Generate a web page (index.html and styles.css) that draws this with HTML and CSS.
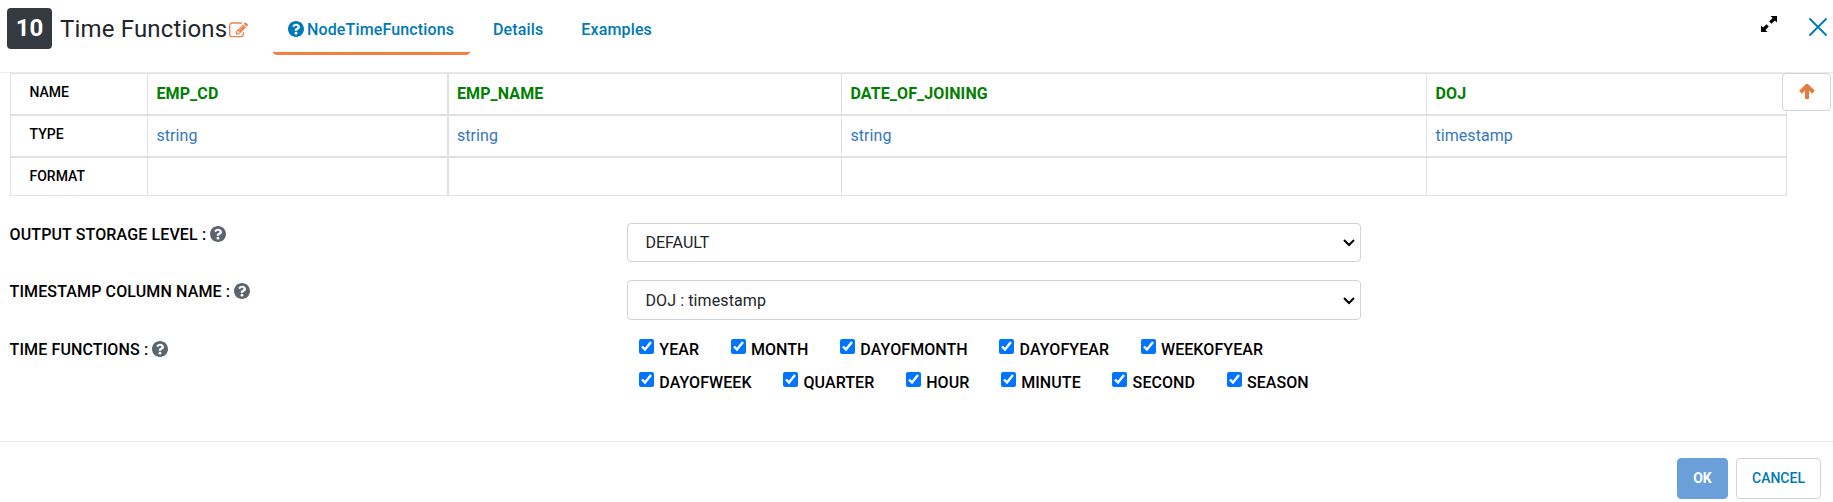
FILE: index.html
```html
<!DOCTYPE html>
<html lang="en">
<head>
<meta charset="utf-8">
<title>Time Functions</title>
<link rel="stylesheet" href="styles.css">
</head>
<body>
<svg class="sprite" aria-hidden="true">
  <symbol id="help" viewBox="8 8 496 496"><path d="M504 256c0 136.997-111.043 248-248 248S8 392.997 8 256C8 119.083 119.043 8 256 8s248 111.083 248 248zM262.655 90c-54.497 0-89.255 22.957-116.549 63.758-3.536 5.286-2.353 12.415 2.715 16.258l34.699 26.31c5.205 3.947 12.621 3.008 16.665-2.122 17.864-22.658 30.113-35.797 57.303-35.797 20.429 0 45.698 13.148 45.698 32.958 0 14.976-12.363 22.667-32.534 33.976C247.128 238.528 216 254.941 216 296v4c0 6.627 5.373 12 12 12h56c6.627 0 12-5.373 12-12v-1.333c0-28.462 83.186-29.647 83.186-106.667 0-58.002-60.165-102-116.531-102zM256 338c-25.365 0-46 20.635-46 46 0 25.364 20.635 46 46 46s46-20.636 46-46c0-25.365-20.635-46-46-46z"/></symbol>
</svg>
<header class="header">
  <span class="badge">10</span>
  <h1 class="title">Time Functions</h1>
  <svg class="edit" viewBox="0 0 1792 1792"><path d="M888 1184l116-116-152-152-116 116v56h96v96h56zm440-720q-16-16-33 1l-350 350q-17 17-1 33t33-1l350-350q17-17 1-33zm80 594v190q0 119-84.500 203.500t-203.500 84.500h-832q-119 0-203.500-84.500t-84.500-203.500v-832q0-119 84.500-203.500t203.500-84.500h832q63 0 117 25 15 7 18 23 3 17-9 29l-49 49q-14 14-32 8-23-6-45-6h-832q-66 0-113 47t-47 113v832q0 66 47 113t113 47h832q66 0 113-47t47-113v-126q0-13 9-22l64-64q15-15 35-7t20 29zm-96-738l288 288-672 672h-288v-288zm444 132l-92 92-288-288 92-92q28-28 68-28t68 28l152 152q28 28 28 68t-28 68z"/></svg>
  <nav class="tabs">
    <a class="tab active"><svg class="help"><use href="#help"/></svg>NodeTimeFunctions</a>
    <a class="tab">Details</a>
    <a class="tab">Examples</a>
  </nav>
  <svg class="expand" viewBox="0 0 16 16"><path d="M9.500 0H16v6.500l-2.100-2.100-3.400 3.400-2.300-2.300 3.400-3.400zM6.500 16H0V9.500l2.100 2.100 3.400-3.400 2.300 2.300-3.400 3.400z"/></svg>
  <svg class="close" viewBox="0 0 18 18"><path d="M1 1l16 16M17 1L1 17"/></svg>
</header>
<main class="body">
  <section class="schema">
    <div class="table">
      <div class="cell label">NAME</div><div class="cell name">EMP_CD</div><div class="cell name thick">EMP_NAME</div><div class="cell name">DATE_OF_JOINING</div><div class="cell name last">DOJ</div>
      <div class="cell label rule">TYPE</div><div class="cell type rule">string</div><div class="cell type rule thick">string</div><div class="cell type rule">string</div><div class="cell type rule last">timestamp</div>
      <div class="cell label rule foot">FORMAT</div><div class="cell rule foot"></div><div class="cell rule foot thick"></div><div class="cell rule foot"></div><div class="cell rule foot last"></div>
    </div>
    <button class="up"><svg viewBox="0 0 16 15"><path d="M1.500 8.200L8 1.900 14.500 8.200M8 2.500V15"/></svg></button>
  </section>
  <form class="form">
    <div class="row first">
      <label class="caption">OUTPUT STORAGE LEVEL : <svg class="help"><use href="#help"/></svg></label>
      <div class="select">DEFAULT<svg class="chevron" viewBox="0 0 12 8"><path d="M1 1l5 5 5-5"/></svg></div>
    </div>
    <div class="row second">
      <label class="caption">TIMESTAMP COLUMN NAME : <svg class="help"><use href="#help"/></svg></label>
      <div class="select">DOJ : timestamp<svg class="chevron" viewBox="0 0 12 8"><path d="M1 1l5 5 5-5"/></svg></div>
    </div>
    <div class="row third">
      <label class="caption">TIME FUNCTIONS : <svg class="help"><use href="#help"/></svg></label>
      <div class="checks">
        <div class="line">
          <label class="check"><input type="checkbox" checked>YEAR</label>
          <label class="check"><input type="checkbox" checked>MONTH</label>
          <label class="check"><input type="checkbox" checked>DAYOFMONTH</label>
          <label class="check"><input type="checkbox" checked>DAYOFYEAR</label>
          <label class="check"><input type="checkbox" checked>WEEKOFYEAR</label>
        </div>
        <div class="line">
          <label class="check"><input type="checkbox" checked>DAYOFWEEK</label>
          <label class="check"><input type="checkbox" checked>QUARTER</label>
          <label class="check"><input type="checkbox" checked>HOUR</label>
          <label class="check"><input type="checkbox" checked>MINUTE</label>
          <label class="check"><input type="checkbox" checked>SECOND</label>
          <label class="check"><input type="checkbox" checked>SEASON</label>
        </div>
      </div>
    </div>
  </form>
</main>
<footer class="footer">
  <button class="btn ok">OK</button>
  <button class="btn cancel">CANCEL</button>
</footer>
</body>
</html>
```
FILE: styles.css
```css
* { box-sizing: border-box; }
body {
  margin: 0;
  height: 502px;
  display: flex;
  flex-direction: column;
  overflow: hidden;
  background: #fff;
  color: #000;
  font: 400 16px/24px Roboto, sans-serif;
}
svg { display: block; flex: none; }
.sprite { position: absolute; width: 0; height: 0; }
.header {
  display: flex;
  align-items: flex-start;
  height: 73px;
  flex: none;
  padding: 8px 6px 0 7px;
  border-bottom: 1px solid #e9ecef;
}
.badge {
  width: 45px;
  height: 41px;
  border-radius: 4px;
  background: #343a40;
  color: #fff;
  font-weight: 700;
  font-size: 24px;
  line-height: 41px;
  text-align: center;
}
.title {
  margin: 1px 0 0 8px;
  width: 169px;
  font-weight: 400;
  font-size: 24px;
  line-height: 41px;
  letter-spacing: 0.17px;
  color: #212529;
  white-space: nowrap;
}
.edit { width: 19px; height: 19px; margin-top: 13px; fill: #e8824a; }
.tabs { display: flex; margin-left: 25px; }
.tab {
  display: flex;
  height: 47px;
  padding: 10px 15px 0;
  margin-right: 8px;
  border-bottom: 3px solid transparent;
  color: #0079b5;
  font-weight: 500;
  letter-spacing: 0.14px;
}
.tab.active { width: 197px; border-color: #f5803e; border-radius: 4px; }
.help { width: 16px; height: 16px; fill: #5a6570; }
.tab .help { margin: 3px 3px 0 0; fill: #0079b5; }
.expand { width: 16px; height: 16px; margin: 8px 32px 0 auto; fill: #000; }
.close { width: 18px; height: 18px; margin-top: 10px; fill: none; stroke: #0079b5; stroke-width: 1.8; stroke-linecap: round; }

.schema { display: flex; align-items: flex-start; padding-left: 10px; }
.table {
  display: grid;
  grid-template-columns: 137px 300px 394px 585px 361px;
  grid-template-rows: 41px 42px 40px;
}
.cell { padding: 8px 0 0 8.5px; border: 0 solid #dee2e6; border-width: 1px 0 0 1px; }
.thick { border-left-width: 2px; padding-left: 8px; }
.last { border-right-width: 1px; }
.rule { border-top-width: 2px; }
.foot { border-bottom-width: 1px; }
.label { padding-left: 18.5px; padding-top: 6px; font-size: 14px; font-weight: 500; }
.name { color: green; font-weight: 700; letter-spacing: 0.1px; }
.type { color: #3578be; letter-spacing: 0.05px; }
.up {
  position: relative;
  width: 49px;
  height: 38px;
  margin-left: -5px;
  padding: 9px 15px 11px 16px;
  background: #fff;
  border: 1px solid #ced4da;
  border-radius: 4px;
}
.up svg { width: 16px; height: 15px; fill: none; stroke: #e27d41; stroke-width: 4; }

.row { display: grid; grid-template-columns: 617px 734px; padding-left: 10px; }
.first { padding-top: 27px; height: 84px; }
.second { height: 58px; }
.caption { display: flex; gap: 4px; margin-left: -0.5px; font-weight: 500; letter-spacing: 0.13px; white-space: nowrap; }
.caption .help { margin-top: 3px; }
.select {
  display: flex;
  align-items: center;
  justify-content: space-between;
  height: 39px;
  padding: 0 5px 0 17.5px;
  border: 1px solid #ced4da;
  border-radius: 4px;
  color: #212529;
}
.second .select { height: 40px; padding-top: 1px; letter-spacing: 0.1px; }
.chevron { width: 12px; height: 8px; fill: none; stroke: #000; stroke-width: 2; }
.checks { padding-left: 12px; }
.line { display: flex; gap: 31.5px; height: 33px; }
.check { display: flex; font-weight: 500; letter-spacing: 0.08px; }
.check input { width: 15px; height: 15px; margin: 1px 5.300px 0 0; accent-color: #0075ff; }

.footer {
  display: flex;
  justify-content: flex-end;
  gap: 8px;
  height: 61px;
  margin-top: auto;
  padding: 16px 12px 0 0;
  border-top: 1px solid #e9ecef;
}
.btn { height: 41px; border-radius: 4px; border: 1px solid #ced4da; font: 500 14px/21px Roboto, sans-serif; padding: 0; }
.ok { width: 51px; background: #6a9fd9; border-color: #6a9fd9; color: #fff; font-weight: 700; }
.cancel { width: 85px; background: #fff; color: #0079b5; }
```
